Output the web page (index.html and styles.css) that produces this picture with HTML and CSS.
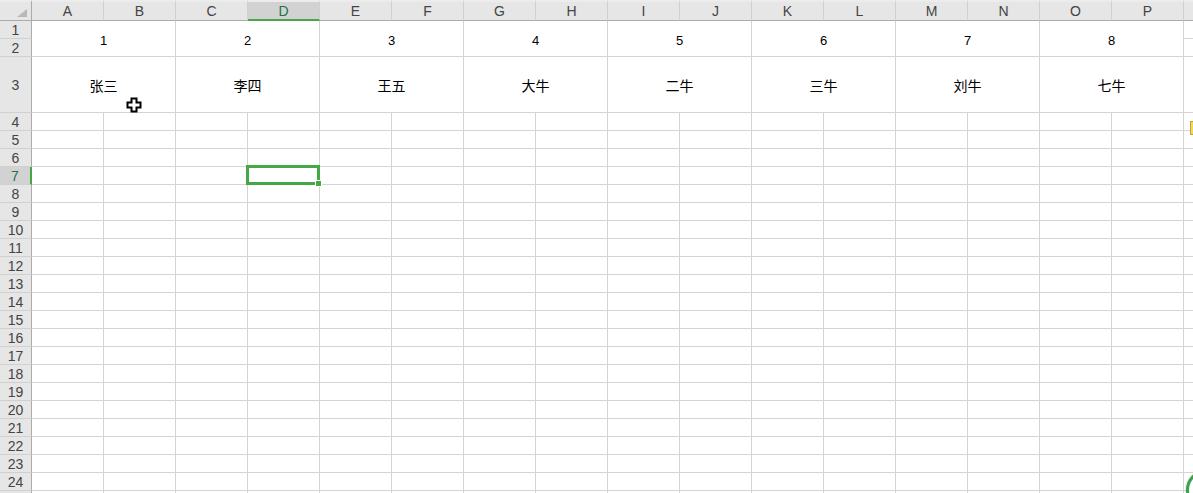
FILE: index.html
```html
<!DOCTYPE html>
<html lang="zh">
<head>
    <meta charset="UTF-8">
    <meta name="viewport" content="width=device-width, initial-scale=1.0">
    <title>Sheet1</title>
    <link rel="stylesheet" href="styles.css">
</head>
<body>
    <div class="sheet" id="sheet">
        <div class="corner">
            <svg width="10" height="8" viewBox="0 0 10 8"><polygon points="10,0 10,8 0,8" fill="#b9b9b9"/></svg>
        </div>
        <div class="col-head">A</div>
        <div class="col-head">B</div>
        <div class="col-head">C</div>
        <div class="col-head active">D</div>
        <div class="col-head">E</div>
        <div class="col-head">F</div>
        <div class="col-head">G</div>
        <div class="col-head">H</div>
        <div class="col-head">I</div>
        <div class="col-head">J</div>
        <div class="col-head">K</div>
        <div class="col-head">L</div>
        <div class="col-head">M</div>
        <div class="col-head">N</div>
        <div class="col-head">O</div>
        <div class="col-head">P</div>
        <div class="col-head last"></div>

        <div class="row-head">1</div>
        <div class="cell merge">1</div>
        <div class="cell merge">2</div>
        <div class="cell merge">3</div>
        <div class="cell merge">4</div>
        <div class="cell merge">5</div>
        <div class="cell merge">6</div>
        <div class="cell merge">7</div>
        <div class="cell merge">8</div>
        <div class="cell last"></div>
        <div class="row-head">2</div>
        <div class="cell last"></div>

        <div class="row-head">3</div>
        <div class="cell wide name">张三</div>
        <div class="cell wide name">李四</div>
        <div class="cell wide name">王五</div>
        <div class="cell wide name">大牛</div>
        <div class="cell wide name">二牛</div>
        <div class="cell wide name">三牛</div>
        <div class="cell wide name">刘牛</div>
        <div class="cell wide name">七牛</div>
        <div class="cell last"></div>
    </div>

    <svg class="pointer" width="17" height="17" viewBox="0 0 17 17">
        <polygon points="5.5,1.5 10.5,1.5 10.5,5.5 14.5,5.5 14.5,10.5 10.5,10.5 10.5,14.5 5.5,14.5 5.5,10.5 1.5,10.5 1.5,5.5 5.5,5.5" fill="#fff" stroke="#000" stroke-width="2"/>
    </svg>
    <div class="note-mark"></div>
    <div class="float-btn"></div>

    <script>
        // rows 4 to 25 (row 25 is only a sliver at the bottom)
        const sheet = document.getElementById('sheet');
        for (let r = 4; r <= 25; r++) {
            const head = document.createElement('div');
            head.className = 'row-head' + (r === 7 ? ' active' : '');
            head.textContent = r < 25 ? r : '';
            sheet.appendChild(head);

            for (let c = 0; c < 16; c++) {
                const cell = document.createElement('div');
                cell.className = 'cell';
                if (r === 7 && c === 3) {
                    cell.classList.add('selected');
                }
                sheet.appendChild(cell);
            }

            const last = document.createElement('div');
            last.className = 'cell last';
            sheet.appendChild(last);
        }
    </script>
</body>
</html>
```

FILE: styles.css
```css
html, body {
    height: 493px;
    overflow: hidden;
}

body {
    margin: 0;
    background-color: #fff;
    font-family: "Liberation Sans", "Noto Sans CJK SC", sans-serif;
    position: relative;
}

.sheet {
    display: grid;
    grid-template-columns: 32px repeat(16, 72px) 1fr;
    grid-template-rows: 21px 18px 18px 56px;
    grid-auto-rows: 18px;
    width: 1193px;
}

.sheet > div {
    box-sizing: border-box;
}

.corner {
    background-color: #e6e6e6;
    border-top: 2px solid #ececec;
    border-right: 1px solid #ababab;
    border-bottom: 1px solid #ababab;
    display: flex;
    align-items: flex-end;
    justify-content: flex-end;
    padding: 0 4px 3px 0;
}

.corner svg {
    display: block;
}

.col-head {
    background-color: #e6e6e6;
    border-top: 2px solid #ececec;
    border-right: 1px solid #d0d0d0;
    border-bottom: 1px solid #ababab;
    color: #444;
    font-size: 14px;
    display: flex;
    align-items: center;
    justify-content: center;
}

.col-head.active {
    background-color: #d2d2d2;
    color: #217346;
    border-bottom: 2px solid #45a745;
}

.col-head.last {
    border-right: none;
}

.row-head {
    background-color: #e6e6e6;
    border-right: 1px solid #ababab;
    border-bottom: 1px solid #d0d0d0;
    color: #444;
    font-size: 14px;
    display: flex;
    align-items: center;
    justify-content: center;
}

.row-head.active {
    background-color: #d2d2d2;
    color: #217346;
    border-right: 2px solid #45a745;
}

.cell {
    border-right: 1px solid #d4d4d4;
    border-bottom: 1px solid #d4d4d4;
    display: flex;
    align-items: center;
    justify-content: center;
    font-size: 13px;
    color: #000;
}

.cell.merge {
    grid-column: span 2;
    grid-row: span 2;
    padding-top: 3px;
}

.cell.wide {
    grid-column: span 2;
}

.cell.name {
    font-size: 14px;
    padding-top: 1px;
}

.cell.last {
    border-right: none;
}

.cell.selected {
    position: relative;
    z-index: 2;
}

.cell.selected::before {
    content: "";
    position: absolute;
    top: -2px;
    left: -2px;
    right: -1px;
    bottom: -1px;
    border: 3px solid #45a745;
}

.cell.selected::after {
    content: "";
    position: absolute;
    width: 5px;
    height: 5px;
    right: -3px;
    bottom: -3px;
    background-color: #45a745;
    border: 1px solid #fff;
}

.pointer {
    position: absolute;
    left: 126px;
    top: 97px;
}

.note-mark {
    position: absolute;
    left: 1190px;
    top: 121px;
    width: 6px;
    height: 12px;
    background-color: #f6d466;
    border: 1px solid #c9a12c;
}

.float-btn {
    position: absolute;
    left: 1186px;
    top: 470px;
    width: 34px;
    height: 34px;
    border-radius: 50%;
    border: 3px solid #3aa34a;
    background-color: #fff;
    box-shadow: 0 0 2px rgba(0, 0, 0, 0.3);
}
```
